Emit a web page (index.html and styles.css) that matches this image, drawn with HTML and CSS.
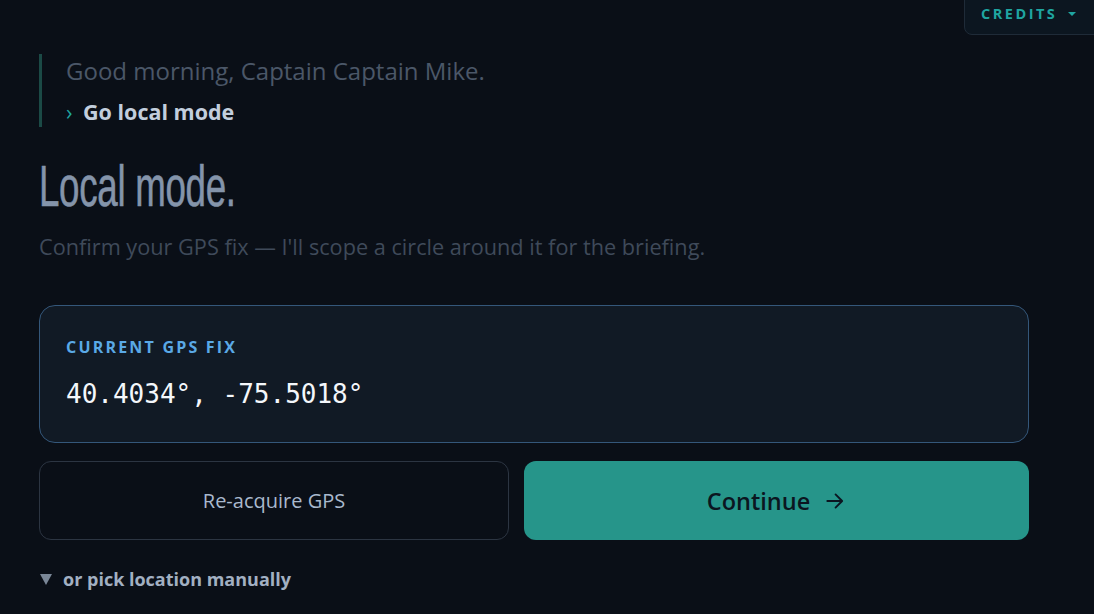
FILE: index.html
```html
<!DOCTYPE html>
<html lang="en">
<head>
<meta charset="utf-8">
<title>Local mode</title>
<link rel="stylesheet" href="styles.css">
</head>
<body>
<button class="credits">CREDITS <span class="caret"></span></button>
<main class="page">
  <blockquote class="chat">
    <p class="greet">Good morning, Captain Captain Mike.</p>
    <p class="cmd"><span class="chev">›</span> Go local mode</p>
  </blockquote>
  <h1 class="title"><span>Local mode.</span></h1>
  <p class="sub">Confirm your GPS fix — I'll scope a circle around it for the briefing.</p>
  <section class="card">
    <div class="label">CURRENT GPS FIX</div>
    <div class="coords">40.4034°, -75.5018°</div>
  </section>
  <div class="actions">
    <button class="btn ghost">Re-acquire GPS</button>
    <button class="btn primary">Continue
      <svg class="arrow" viewBox="0 0 20 20" width="22" height="22" aria-hidden="true"><path d="M3 10h13M10.5 4l6 6-6 6" fill="none" stroke="currentColor" stroke-width="1.7" stroke-linecap="round" stroke-linejoin="round"/></svg>
    </button>
  </div>
  <details class="manual">
    <summary>or pick location manually</summary>
  </details>
</main>
</body>
</html>
```
FILE: styles.css
```css
* { box-sizing: border-box; }
html, body { margin: 0; padding: 0; }
body {
  background: #0a0f17;
  font-family: "Open Sans", "Noto Sans", sans-serif;
  color: #cbd5e1;
  width: 1094px;
  height: 614px;
  overflow: hidden;
  position: relative;
}
.credits {
  position: absolute;
  top: -1px;
  left: 964px;
  width: 140px;
  height: 36px;
  background: #0c1620;
  border: 1px solid #1f2b38;
  border-radius: 0 0 0 8px;
  color: #1fa5a0;
  font-family: "Open Sans", sans-serif;
  font-weight: 700;
  font-size: 14.5px;
  letter-spacing: 2.5px;
  text-align: left;
  padding: 0 0 7px 16px;
  display: flex;
  align-items: center;
}
.credits .caret {
  width: 0;
  height: 0;
  border-left: 4px solid transparent;
  border-right: 4px solid transparent;
  border-top: 4px solid #1fa5a0;
  margin-left: 11px;
}
.page {
  width: 990px;
  margin-left: 39px;
  padding-top: 54px;
}
.chat {
  margin: 0;
  border-left: 3px solid #1b4a46;
  padding: 2px 0 4px 24px;
  height: 73px;
}
.greet {
  margin: 0;
  font-size: 24px;
  line-height: 30px;
  color: #4b5768;
}
.cmd {
  margin: 12px 0 0 0;
  font-size: 21.5px;
  line-height: 28px;
  font-weight: 700;
  color: #c2cedd;
}
.chev { color: #1fa5a0; font-weight: 400; margin-right: 5px; }
.title {
  margin: 34px 0 0 0;
  height: 50px;
  line-height: 50px;
  font-family: "Liberation Sans", sans-serif;
  font-weight: 400;
  font-size: 57px;
  color: #8494aa;
}
.title span {
  display: inline-block;
  transform: scaleX(0.645);
  transform-origin: left center;
  letter-spacing: -0.5px;
  -webkit-text-stroke: 0.6px #8494aa;
}
.sub {
  margin: 23px 0 0 0;
  font-size: 21.7px;
  line-height: 26px;
  color: #3f4a5a;
}
.card {
  margin-top: 45px;
  height: 138px;
  border: 1px solid #34577a;
  border-radius: 16px;
  background: #111a25;
  padding: 32px 26px 0 26px;
}
.label {
  font-size: 16px;
  font-weight: 700;
  letter-spacing: 2.2px;
  color: #5aa9e6;
  line-height: 18px;
}
.coords {
  margin-top: 22px;
  font-family: "DejaVu Sans Mono", monospace;
  font-size: 26px;
  line-height: 32px;
  color: #f4f7fb;
}
.actions {
  display: flex;
  gap: 15px;
  margin-top: 18px;
}
.btn {
  height: 79px;
  border-radius: 12px;
  font-family: "Open Sans", sans-serif;
  cursor: pointer;
}
.ghost {
  width: 470px;
  background: transparent;
  border: 1px solid #2c3542;
  color: #a9b9cd;
  font-size: 20px;
}
.primary {
  flex: 1;
  background: #26958a;
  border: none;
  color: #0b1520;
  font-size: 23.5px;
  font-weight: 600;
  display: flex;
  align-items: center;
  justify-content: center;
  gap: 14px;
}
.arrow { display: block; }
.manual { margin-top: 27px; }
.manual summary {
  font-size: 18px;
  line-height: 25px;
  font-weight: 700;
  color: #a2b0c2;
  cursor: pointer;
  list-style: none;
  display: flex;
  align-items: center;
}
.manual summary::-webkit-details-marker { display: none; }
.manual summary::before {
  content: "";
  width: 0;
  height: 0;
  border-left: 6.5px solid transparent;
  border-right: 6.5px solid transparent;
  border-top: 11px solid #7a8797;
  margin: 0 11px 0 1px;
}
```
